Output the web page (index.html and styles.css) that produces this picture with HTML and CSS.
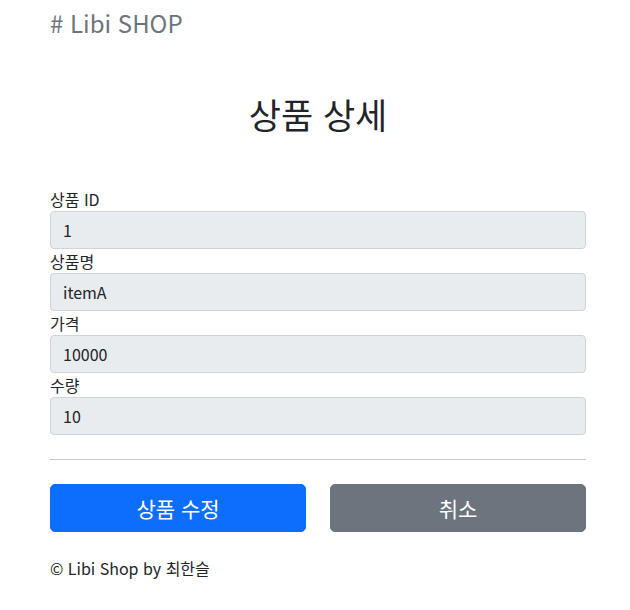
FILE: index.html
```html
<!DOCTYPE html>
<html lang="ko">
<head>
<meta charset="utf-8">
<title>상품 상세</title>
<link rel="stylesheet" href="styles.css">
</head>
<body>
<div class="container">
  <header class="brand"># Libi SHOP</header>
  <div class="title-wrap">
    <h2 class="title">상품 상세</h2>
  </div>
  <form class="form">
    <div class="field">
      <label class="label" for="itemId">상품 ID</label>
      <input class="input" id="itemId" type="text" value="1" readonly>
    </div>
    <div class="field">
      <label class="label" for="itemName">상품명</label>
      <input class="input" id="itemName" type="text" value="itemA" readonly>
    </div>
    <div class="field">
      <label class="label" for="price">가격</label>
      <input class="input" id="price" type="text" value="10000" readonly>
    </div>
    <div class="field">
      <label class="label" for="quantity">수량</label>
      <input class="input" id="quantity" type="text" value="10" readonly>
    </div>
    <hr class="divider">
    <div class="actions">
      <button type="button" class="btn btn-primary">상품 수정</button>
      <button type="button" class="btn btn-secondary">취소</button>
    </div>
  </form>
  <footer class="footer">© Libi Shop by 최한슬</footer>
</div>
</body>
</html>
```
FILE: styles.css
```css
* { box-sizing: border-box; }
html, body { margin: 0; padding: 0; background: #fff; }
body {
  font-family: "Noto Sans CJK KR", "Noto Sans", sans-serif;
  font-size: 16px;
  line-height: 24px;
  color: #212529;
}
.container {
  width: 536px;
  margin-left: 50px;
}
.brand {
  padding-top: 8px;
  font-size: 24px;
  line-height: 29px;
  color: #6c757d;
}
.title-wrap {
  padding: 56px 0 52px;
  text-align: center;
}
.title {
  margin: 0;
  font-size: 35px;
  line-height: 42px;
  font-weight: 400;
}
.form { margin: 0; }
.field { display: flex; flex-direction: column; }
.label { display: block; line-height: 24px; }
.input {
  display: block;
  width: 100%;
  height: 38px;
  padding: 6px 12px;
  font: inherit;
  color: #212529;
  background: #e9ecef;
  border: 1px solid #ced4da;
  border-radius: 4px;
  outline: none;
}
.divider {
  margin: 24px 0;
  border: 0;
  border-top: 1px solid #c8c9ca;
  height: 0;
}
.actions {
  display: grid;
  grid-template-columns: 1fr 1fr;
  column-gap: 24px;
}
.btn {
  height: 48px;
  padding: 8px 16px;
  font-family: inherit;
  font-size: 21px;
  line-height: 30px;
  color: #fff;
  border: 1px solid transparent;
  border-radius: 5px;
  cursor: pointer;
}
.btn-primary { background: #0d6efd; border-color: #0d6efd; }
.btn-secondary { background: #6c757d; border-color: #6c757d; }
.footer {
  margin-top: 24px;
  line-height: 24px;
}
```
